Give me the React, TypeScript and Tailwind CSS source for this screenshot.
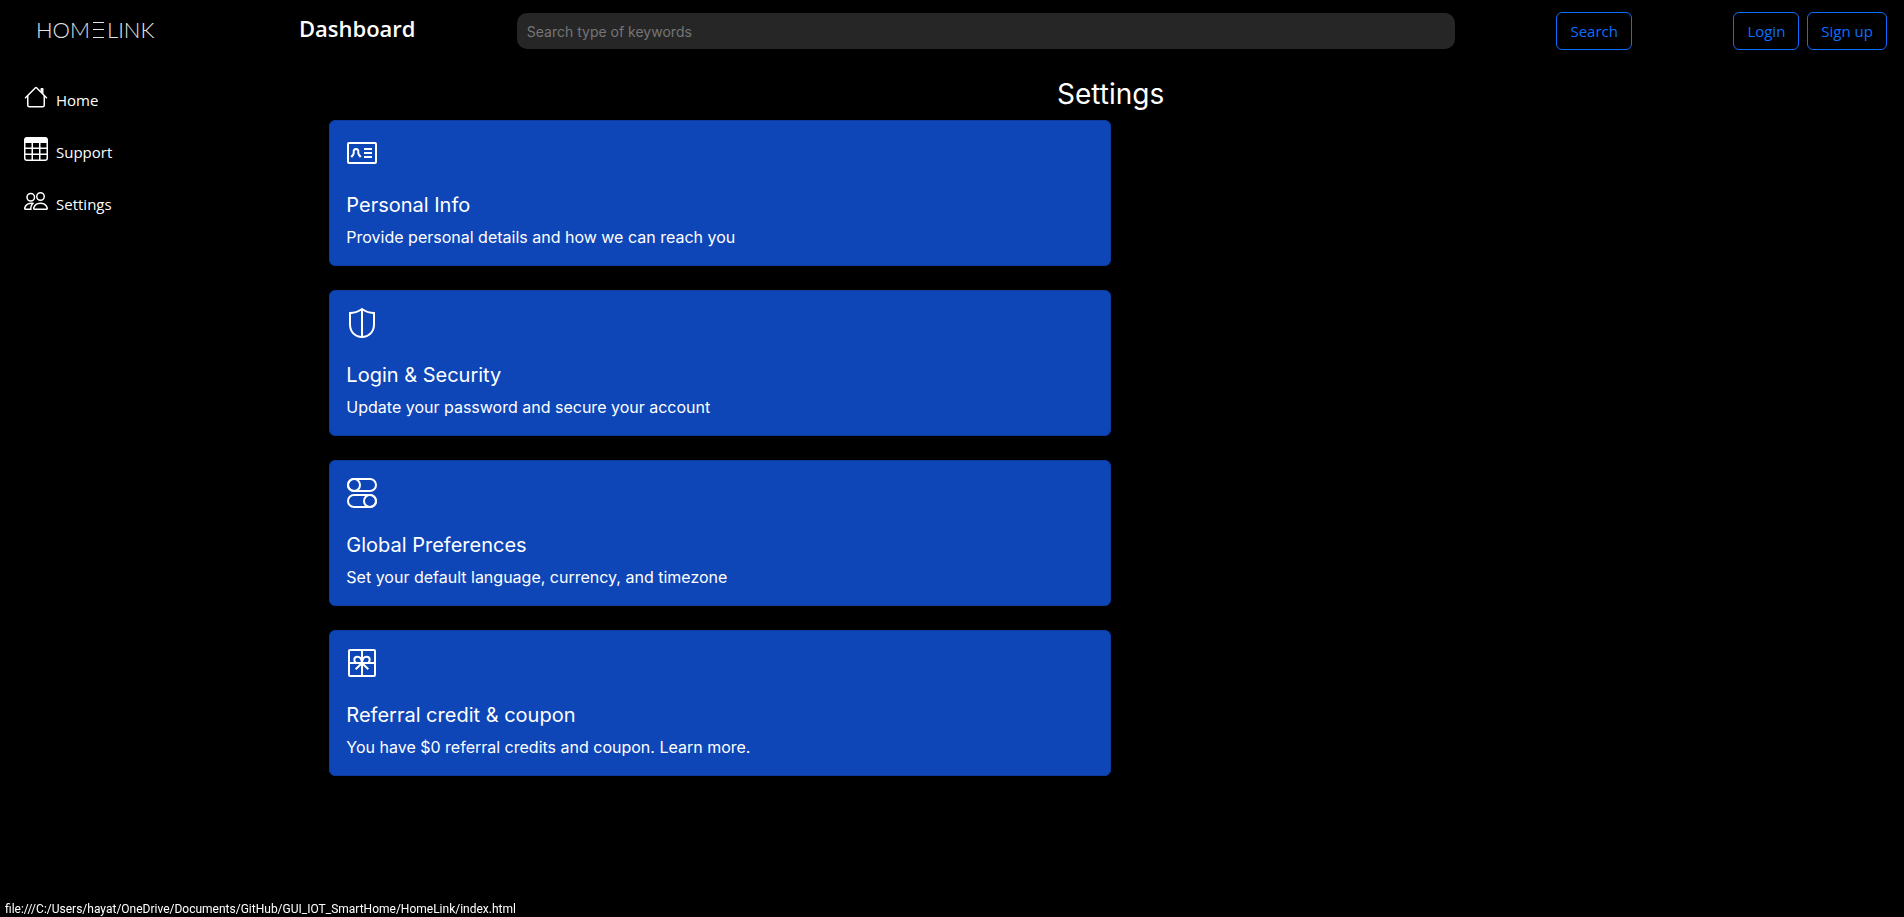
import type { ReactNode } from "react";
import { BsPeople, BsTable } from "react-icons/bs";

const outlineButton =
  "h-[38px] rounded-md border border-[#0d6efd] px-[13px] text-[15px] leading-6 text-[#0d6efd] hover:bg-[#0d6efd] hover:text-white";

function HouseIcon() {
  return (
    <svg viewBox="0 0 16 16" className="size-6" fill="currentColor" aria-hidden="true">
      <path
        fillRule="evenodd"
        d="M2 13.5V7h1v6.5a.5.5 0 0 0 .5.5h9a.5.5 0 0 0 .5-.5V7h1v6.5a1.5 1.5 0 0 1-1.5 1.5h-9A1.5 1.5 0 0 1 2 13.5zm11-11V6l-2-2V2.5a.5.5 0 0 1 .5-.5h1a.5.5 0 0 1 .5.5z"
      />
      <path
        fillRule="evenodd"
        d="M7.293 1.5a1 1 0 0 1 1.414 0l6.647 6.646a.5.5 0 0 1-.708.708L8 2.207 1.354 8.854a.5.5 0 1 1-.708-.708L7.293 1.5z"
      />
    </svg>
  );
}

function CardIcon({ children }: { children: ReactNode }) {
  return (
    <svg
      viewBox="0 0 32 32"
      className="mb-6 block size-8"
      fill="none"
      stroke="currentColor"
      strokeWidth={2}
      aria-hidden="true"
    >
      {children}
    </svg>
  );
}

const cards = [
  {
    title: "Personal Info",
    text: "Provide personal details and how we can reach you",
    icon: (
      <>
        <rect x="2" y="6" width="28" height="20" rx="1" />
        <path d="M18 12h8M18 16h8M18 20h8" />
        <path d="M5.500 20.200c.300-1.200.900-1.700 1.600-2.400.8-.8.700-1.500.6-2.500C7.500 13.300 8.300 12 10 12s2.500 1.300 2.300 3.300c-.1 1-.2 1.700.6 2.500.7.700 1.300 1.200 1.600 2.400" />
      </>
    ),
  },
  {
    title: "Login & Security",
    text: "Update your password and secure your account",
    icon: (
      <path
        stroke="none"
        fill="currentColor"
        d="M16 .798l.555.37C20.398 3.73 24.208 5 28 5h1v12.5C29 25.574 23.21 31 16 31S3 25.574 3 17.5V5h1c3.792 0 7.602-1.27 11.445-3.832L16 .798zm-1 3.005c-3.2 1.866-6.418 2.920-9.648 3.149L5 6.972V17.5c0 6.558 4.347 10.991 10 11.458V3.803zm2 0v25.155c5.654-.467 10-4.900 10-11.458V6.972l-.352-.02c-3.230-.229-6.448-1.283-9.648-3.150z"
      />
    ),
  },
  {
    title: "Global Preferences",
    text: "Set your default language, currency, and timezone",
    icon: (
      <>
        <rect x="2" y="2" width="28" height="12" rx="6" />
        <circle cx="8" cy="8" r="6" />
        <rect x="2" y="18" width="28" height="12" rx="6" />
        <circle cx="24" cy="24" r="6" />
      </>
    ),
  },
  {
    title: "Referral credit & coupon",
    text: "You have $0 referral credits and coupon. Learn more.",
    icon: (
      <>
        <rect x="3" y="3" width="26" height="26" rx="1" />
        <path d="M16 3v26M3 16h26M16 16l-6.300 6.300M16 16l6.300 6.300" />
        <path d="M16 16c-.3-3.800-2-6.200-4.500-6.200-1.900 0-3.200 1.300-3.200 3 0 1.200.6 2 1.400 2.500M16 16c.3-3.800 2-6.200 4.500-6.200 1.900 0 3.200 1.300 3.200 3 0 1.200-.6 2-1.400 2.500" />
      </>
    ),
  },
];

const links = [
  { label: "Home", icon: <HouseIcon /> },
  { label: "Support", icon: <BsTable className="size-6" /> },
  { label: "Settings", icon: <BsPeople className="size-6" /> },
];

export default function App() {
  return (
    <div className="min-h-screen bg-black font-['Inter',sans-serif] text-white">
      <header className="grid grid-cols-[299fr_218fr_1040fr_177fr_auto] items-start pt-3 pr-[17px] font-['Open_Sans',sans-serif]">
        <a
          href="#"
          aria-label="HOMELINK"
          className="flex items-center gap-[3px] pl-9 font-['Lato',sans-serif] text-[22px] leading-9 font-light text-[#e5e5e5]"
        >
          <span>HOM</span>
          <svg viewBox="0 0 11 16" className="h-4 w-[11px]" stroke="currentColor" aria-hidden="true">
            <path d="M0 .5h11M0 7.500h11M0 15.500h11" />
          </svg>
          <span>LINK</span>
        </a>
        <div className="text-[22px] leading-8 font-semibold">Dashboard</div>
        <input
          type="search"
          aria-label="Search"
          placeholder="Search type of keywords"
          className="mt-px mr-[101px] h-9 rounded-[10px] bg-[#262626] px-[10px] font-['Inter',sans-serif] text-sm text-white placeholder:text-[#757575] focus:outline-none"
        />
        <div>
          <button type="button" className={outlineButton}>
            Search
          </button>
        </div>
        <div className="flex gap-2">
          <button type="button" className={outlineButton}>
            Login
          </button>
          <button type="button" className={outlineButton}>
            Sign up
          </button>
        </div>
      </header>

      <div className="grid grid-cols-6">
        <nav className="flex flex-col gap-7 pt-[35px] pl-6 font-['Open_Sans',sans-serif]">
          {links.map((link) => (
            <a key={link.label} href="#" className="flex h-6 items-start gap-2 text-[15px]">
              {link.icon}
              <span className="pt-[3px] leading-6">{link.label}</span>
            </a>
          ))}
        </nav>
        <main className="col-span-5 px-3 pt-[27px]">
          <h1 className="mb-[9px] text-center text-[28px] leading-[34px]">Settings</h1>
          <div className="grid grid-cols-2">
            <div className="flex flex-col gap-6">
              {cards.map((card) => (
                <section key={card.title} className="rounded-md border border-[#0c3d9e] bg-[#0e46b7] p-4">
                  <CardIcon>{card.icon}</CardIcon>
                  <h2 className="mb-2 text-xl leading-6">{card.title}</h2>
                  <p className="text-base leading-6">{card.text}</p>
                </section>
              ))}
            </div>
          </div>
        </main>
      </div>

      <div className="fixed bottom-0 left-0 px-[5px] font-['Roboto',sans-serif] text-xs leading-4">
        file:///C:/Users/hayat/OneDrive/Documents/GitHub/GUI_IOT_SmartHome/HomeLink/index.html
      </div>
    </div>
  );
}
